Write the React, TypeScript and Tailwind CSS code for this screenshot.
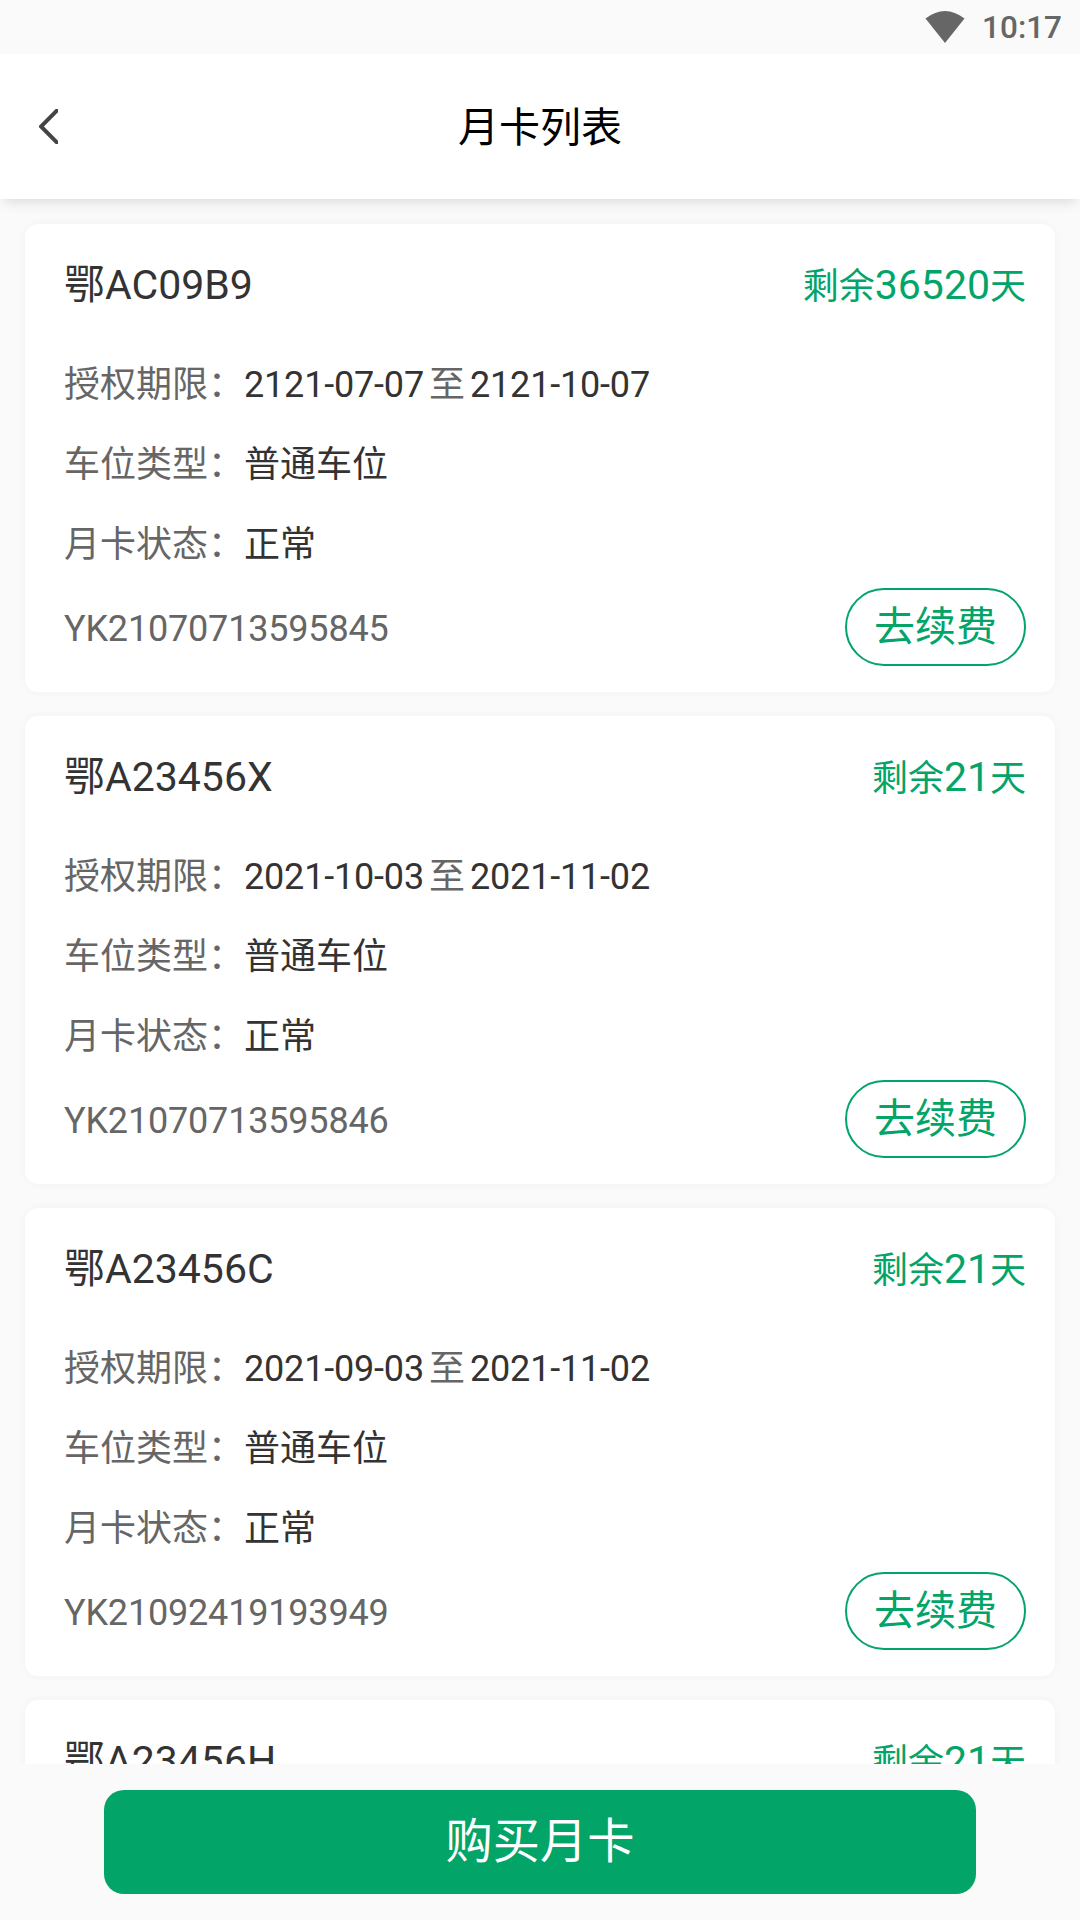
interface MonthCard {
  plate: string;
  daysLeft: number;
  start: string;
  end: string;
  spotType: string;
  status: string;
  cardNo: string;
}

const cards: MonthCard[] = [
  { plate: "鄂AC09B9", daysLeft: 36520, start: "2121-07-07", end: "2121-10-07", spotType: "普通车位", status: "正常", cardNo: "YK21070713595845" },
  { plate: "鄂A23456X", daysLeft: 21, start: "2021-10-03", end: "2021-11-02", spotType: "普通车位", status: "正常", cardNo: "YK21070713595846" },
  { plate: "鄂A23456C", daysLeft: 21, start: "2021-09-03", end: "2021-11-02", spotType: "普通车位", status: "正常", cardNo: "YK21092419193949" },
  { plate: "鄂A23456H", daysLeft: 21, start: "2021-09-03", end: "2021-11-02", spotType: "普通车位", status: "正常", cardNo: "YK21092419193950" },
];

function StatusBar() {
  return (
    <div className="flex h-[54px] shrink-0 items-center justify-end pr-[18px] text-[#666666]">
      <svg className="mr-[17px] h-[32px] w-[40px]" viewBox="0 0 40 32" fill="currentColor">
        <path d="M0.5 7.5Q20 -7.5 39.5 7.5L20 32Z" />
      </svg>
      <span className="pt-[2px] text-[31.5px] font-medium leading-none">10:17</span>
    </div>
  );
}

function Header() {
  return (
    <header className="relative z-10 flex h-[145px] shrink-0 items-center bg-white px-[39px] shadow-[0_7px_12px_-4px_rgba(0,0,0,0.13)]">
      <svg className="h-[35px] w-[19px]" viewBox="0 0 19 35" fill="none" stroke="#444444" strokeWidth="4">
        <path d="M20 -0.5L2 17.5L20 35.5" />
      </svg>
      <h1 className="flex-1 pr-[19px] pt-[4px] text-center text-[41px] leading-none text-black">月卡列表</h1>
    </header>
  );
}

function CardItem({ card }: { card: MonthCard }) {
  return (
    <div className="h-[468px] shrink-0 rounded-[13px] bg-white pl-[39px] pr-[29px] pt-px shadow-[0_0_10px_rgba(0,0,0,0.04)]">
      <div className="flex h-[120px] items-center justify-between">
        <span className="text-[41px]">{card.plate}</span>
        <span className="text-[#03A468]">
          剩余<span className="text-[41px]">{card.daysLeft}</span>天
        </span>
      </div>

      <div className="flex h-20 items-center">
        <span className="text-[#666666]">授权期限：</span>
        <span className="tracking-[-0.18px]">{card.start}</span>
        <span className="mx-[5px] text-[#666666]">至</span>
        <span className="tracking-[-0.18px]">{card.end}</span>
      </div>
      <div className="flex h-20 items-center">
        <span className="text-[#666666]">车位类型：</span>
        <span>{card.spotType}</span>
      </div>
      <div className="flex h-20 items-center">
        <span className="text-[#666666]">月卡状态：</span>
        <span>{card.status}</span>
      </div>

      <div className="flex h-[84px] items-center justify-between">
        <span className="pt-[3px] tracking-[-0.18px] text-[#666666]">{card.cardNo}</span>
        <button className="h-[78px] w-[181px] rounded-full border-2 border-[#03A468] text-[41px] leading-none text-[#03A468]">
          去续费
        </button>
      </div>
    </div>
  );
}

export default function App() {
  return (
    <div className="flex h-[1920px] w-[1080px] flex-col overflow-hidden bg-[#FAFAFA] font-['Roboto','Noto_Sans_CJK_SC',sans-serif] text-[36px] leading-none text-[#333333]">
      <StatusBar />
      <Header />

      <main className="flex min-h-0 flex-1 flex-col gap-6 overflow-hidden px-[25px] pt-[25px]">
        {cards.map((card) => (
          <CardItem key={card.plate} card={card} />
        ))}
      </main>

      <footer className="h-[156px] shrink-0 px-[104px] pt-[26px]">
        <button className="h-[104px] w-full rounded-[20px] bg-[#03A468] pt-px text-[47.25px] leading-none text-white">
          购买月卡
        </button>
      </footer>
    </div>
  );
}
